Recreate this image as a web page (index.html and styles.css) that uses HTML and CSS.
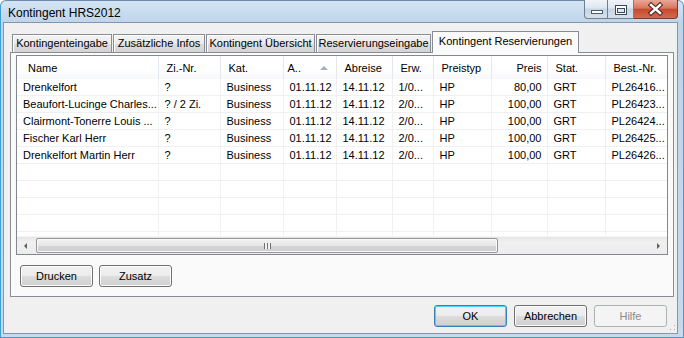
FILE: index.html
```html
<!DOCTYPE html>
<html lang="de">
<head>
    <meta charset="UTF-8">
    <title>Kontingent HRS2012</title>
    <link rel="stylesheet" href="styles.css">
</head>
<body>
    <div class="window">
        <!-- Title bar -->
        <div class="titlebar">
            <span class="title">Kontingent HRS2012</span>
            <div class="caption-btns">
                <div class="cap cap-min">
                    <svg width="24" height="18" viewBox="0 0 24 18"><rect x="6.5" y="10.5" width="11" height="3" fill="#fbfcfd" stroke="#4a5b6e"/></svg>
                </div>
                <div class="cap cap-max">
                    <svg width="26" height="18" viewBox="0 0 26 18"><rect x="7.5" y="5.5" width="11" height="9" fill="#fff" stroke="#3a4a5c"/><rect x="9.5" y="8.5" width="7" height="4" fill="#dfe6ee" stroke="#3a4a5c"/></svg>
                </div>
                <div class="cap cap-close">
                    <svg width="44" height="18" viewBox="0 0 44 18"><path d="M17 5 L26 13 M26 5 L17 13" stroke="#4b2a24" stroke-width="4.5" stroke-linecap="square"/><path d="M17 5 L26 13 M26 5 L17 13" stroke="#fff" stroke-width="2.4" stroke-linecap="square"/></svg>
                </div>
            </div>
        </div>

        <div class="client">
            <!-- Tabs -->
            <div class="tabs">
                <div class="tab tab-1">Kontingenteingabe</div>
                <div class="tab tab-2">Zusätzliche Infos</div>
                <div class="tab tab-3">Kontingent Übersicht</div>
                <div class="tab tab-4">Reservierungseingabe</div>
                <div class="tab tab-active">Kontingent Reservierungen</div>
            </div>

            <div class="panel">
                <div class="listview">
                    <div class="list-area">
                        <table>
                            <colgroup>
                                <col class="c-name"><col class="c-zi"><col class="c-kat"><col class="c-an"><col class="c-ab">
                                <col class="c-erw"><col class="c-typ"><col class="c-preis"><col class="c-stat"><col class="c-best">
                            </colgroup>
                            <thead>
                                <tr>
                                    <th class="h-name">Name</th>
                                    <th>Zi.-Nr.</th>
                                    <th>Kat.</th>
                                    <th class="h-sort">A..<span class="sort-arrow"></span></th>
                                    <th>Abreise</th>
                                    <th>Erw.</th>
                                    <th>Preistyp</th>
                                    <th class="num">Preis</th>
                                    <th>Stat.</th>
                                    <th class="h-best">Best.-Nr.</th>
                                </tr>
                            </thead>
                            <tbody>
                                <tr><td>Drenkelfort</td><td>?</td><td>Business</td><td>01.11.12</td><td>14.11.12</td><td>1/0...</td><td>HP</td><td class="num">80,00</td><td>GRT</td><td>PL26416...</td></tr>
                                <tr><td>Beaufort-Lucinge Charles...</td><td>? / 2 Zi.</td><td>Business</td><td>01.11.12</td><td>14.11.12</td><td>2/0...</td><td>HP</td><td class="num">100,00</td><td>GRT</td><td>PL26423...</td></tr>
                                <tr><td>Clairmont-Tonerre Louis ...</td><td>?</td><td>Business</td><td>01.11.12</td><td>14.11.12</td><td>2/0...</td><td>HP</td><td class="num">100,00</td><td>GRT</td><td>PL26424...</td></tr>
                                <tr><td>Fischer Karl Herr</td><td>?</td><td>Business</td><td>01.11.12</td><td>14.11.12</td><td>2/0...</td><td>HP</td><td class="num">100,00</td><td>GRT</td><td>PL26425...</td></tr>
                                <tr><td>Drenkelfort Martin Herr</td><td>?</td><td>Business</td><td>01.11.12</td><td>14.11.12</td><td>2/0...</td><td>HP</td><td class="num">100,00</td><td>GRT</td><td>PL26426...</td></tr>
                                <tr><td></td><td></td><td></td><td></td><td></td><td></td><td></td><td></td><td></td><td></td></tr>
                                <tr><td></td><td></td><td></td><td></td><td></td><td></td><td></td><td></td><td></td><td></td></tr>
                                <tr><td></td><td></td><td></td><td></td><td></td><td></td><td></td><td></td><td></td><td></td></tr>
                                <tr><td></td><td></td><td></td><td></td><td></td><td></td><td></td><td></td><td></td><td></td></tr>
                                <tr><td></td><td></td><td></td><td></td><td></td><td></td><td></td><td></td><td></td><td></td></tr>
                            </tbody>
                        </table>
                    </div>
                    <!-- Horizontal scrollbar -->
                    <div class="hscroll">
                        <div class="arrow-btn arrow-left"><span class="tri-left"></span></div>
                        <div class="thumb"><span class="grip"></span></div>
                        <div class="track-rest"></div>
                        <div class="arrow-btn arrow-right"><span class="tri-right"></span></div>
                    </div>
                </div>

                <div class="panel-buttons">
                    <button class="btn">Drucken</button>
                    <button class="btn">Zusatz</button>
                </div>
            </div>

            <div class="dialog-buttons">
                <button class="btn btn-default">OK</button>
                <button class="btn">Abbrechen</button>
                <button class="btn btn-disabled">Hilfe</button>
                <svg class="size-grip" width="7" height="13" viewBox="0 0 7 13">
                    <rect x="5" y="3" width="1" height="1" fill="#a8a8a8"/>
                    <rect x="5" y="7" width="1" height="1" fill="#a8a8a8"/>
                    <rect x="1" y="7" width="1" height="1" fill="#a8a8a8"/>
                    <rect x="5" y="11" width="1" height="1" fill="#a8a8a8"/>
                    <rect x="1" y="11" width="1" height="1" fill="#a8a8a8"/>
                </svg>
            </div>
        </div>
    </div>
</body>
</html>
```

FILE: styles.css
```css
body {
    margin: 0;
    font-family: 'Liberation Sans', Arial, sans-serif;
    font-size: 11px;
    color: #000;
    background: #fff;
}

/* window frame */
.window {
    width: 684px;
    height: 338px;
    box-sizing: border-box;
    border: 1px solid #3e9fd3;
    border-top-color: #6c8cae;
    border-radius: 6px 6px 0 0;
    padding: 0 5px 3px 2px;
    background: linear-gradient(#d4e4f4, #bed4ea 22px, #c6daee);
    display: flex;
    flex-direction: column;
}
.titlebar {
    height: 21px;
    display: flex;
    justify-content: space-between;
    align-items: flex-start;
}
.title {
    padding: 5px 0 0 5px;
    font-size: 12px;
    line-height: 14px;
    color: #000;
}
.caption-btns {
    display: flex;
    margin-top: -1px;
}
.cap {
    height: 19px;
    box-sizing: border-box;
    border: 1px solid #6f8093;
    border-top: none;
    background: linear-gradient(#f0f4f9, #dde6f0 45%, #c7d4e3 50%, #d6e0ec);
}
.cap svg {
    display: block;
}
.cap-min {
    width: 24px;
    border-radius: 0 0 0 4px;
}
.cap-max {
    width: 26px;
    border-left: none;
}
.cap-close {
    width: 44px;
    border-left: none;
    border-color: #7a3a2e;
    border-radius: 0 0 4px 0;
    background: linear-gradient(#eba796, #d9765f 45%, #c64a2f 52%, #d46a4e);
}

/* client area */
.client {
    flex: 1;
    background-color: #f0f0f0;
    border: 1px solid #8396ab;
    padding: 8px 3px 0 6px;
    display: flex;
    flex-direction: column;
}

/* tabs */
.tabs {
    height: 21px;
    display: flex;
    align-items: flex-end;
    padding-left: 2px;
    position: relative;
    z-index: 1;
}
.tab {
    height: 18px;
    box-sizing: border-box;
    border: 1px solid #898c95;
    border-bottom: none;
    margin-right: 1px;
    background: linear-gradient(#f3f3f3, #ebebeb 50%, #dddddd 51%, #d4d4d4);
    box-shadow: inset 1px 1px 0 #fff;
    text-align: center;
    line-height: 17px;
    white-space: nowrap;
}
.tab-1 { width: 100px; }
.tab-2 { width: 92px; }
.tab-3 { width: 109px; }
.tab-4 { width: 115px; }
.tab-active {
    width: 147px;
    height: 22px;
    margin-bottom: -1px;
    background: #fafafa;
    box-shadow: none;
    line-height: 19px;
}

.panel {
    height: 245px;
    box-sizing: border-box;
    border: 1px solid #898c95;
    background-color: #fafafa;
    padding: 2px 5px 0 5px;
}

/* list view */
.listview {
    height: 200px;
    box-sizing: border-box;
    border: 1px solid #828790;
    background: #fff;
    display: flex;
    flex-direction: column;
}
.list-area {
    height: 181px;
    overflow: hidden;
}
table {
    width: 650px;
    table-layout: fixed;
    border-collapse: collapse;
}
.c-name { width: 141px; }
.c-zi { width: 62px; }
.c-kat { width: 63px; }
.c-an { width: 53px; }
.c-ab { width: 56px; }
.c-erw { width: 41px; }
.c-typ { width: 58px; }
.c-preis { width: 56px; }
.c-stat { width: 58px; }
.c-best { width: 62px; }

th {
    height: 23px;
    padding: 0 0 0 8px;
    font-weight: normal;
    text-align: left;
    white-space: nowrap;
    overflow: hidden;
    border-right: 1px solid #e3e8ee;
    background: linear-gradient(#fff, #fff 60%, #f6f7f9);
}
th.h-name { padding-left: 11px; }
th.h-sort { padding-left: 4px; position: relative; }
th.h-best { padding-left: 8px; }
.sort-arrow {
    position: absolute;
    left: 36px;
    top: 10px;
    border-left: 4px solid transparent;
    border-right: 4px solid transparent;
    border-bottom: 4px solid #a7b0ba;
}
td {
    height: 16px;
    padding: 0 0 0 6px;
    line-height: 16px;
    white-space: nowrap;
    overflow: hidden;
    border-right: 1px solid #f0f0f0;
    border-bottom: 1px solid #f0f0f0;
}
th.num, td.num {
    text-align: right;
    padding: 0 5px 0 0;
}

/* horizontal scrollbar */
.hscroll {
    height: 17px;
    display: flex;
    align-items: center;
    background: linear-gradient(#e6e6e6, #f0f0f0 30%, #ededed);
    border-top: 1px solid #f4f4f4;
}
.arrow-btn {
    width: 17px;
    height: 17px;
    display: flex;
    align-items: center;
    justify-content: center;
}
.arrow-left { margin-right: 2px; }
.tri-left {
    border-top: 3px solid transparent;
    border-bottom: 3px solid transparent;
    border-right: 3px solid #606060;
}
.tri-right {
    border-top: 3px solid transparent;
    border-bottom: 3px solid transparent;
    border-left: 3px solid #606060;
}
.thumb {
    width: 462px;
    height: 15px;
    box-sizing: border-box;
    border: 1px solid #969696;
    border-radius: 2px;
    background: linear-gradient(#f3f3f3, #e6e6e6 50%, #d5d5d5 51%, #cfcfcf);
    box-shadow: inset 0 0 0 1px #f8f8f8;
    display: flex;
    align-items: center;
    justify-content: center;
}
.grip {
    width: 7px;
    height: 6px;
    background: repeating-linear-gradient(90deg, #6e6e6e 0 1px, #f4f4f4 1px 3px);
}
.track-rest {
    flex: 1;
}

/* buttons */
.panel-buttons {
    display: flex;
    gap: 6px;
    padding: 10px 0 0 4px;
}
.btn {
    width: 73px;
    height: 22px;
    padding: 0;
    font-family: 'Liberation Sans', Arial, sans-serif;
    font-size: 11px;
    color: #000;
    border: 1px solid #707070;
    border-radius: 3px;
    background: linear-gradient(#f2f2f2, #ebebeb 50%, #dddddd 51%, #cfcfcf);
    box-shadow: inset 0 0 0 1px #fcfcfc;
}
.btn-default {
    border-color: #3c7fb1;
    box-shadow: inset 0 0 0 1px #48d2fa;
    background: linear-gradient(#f2f2f2, #ebebeb 50%, #dddddd 51%, #cfcfcf);
}
.btn-disabled {
    color: #8b8b8b;
    border-color: #adb2b5;
    background: #f4f4f4;
    box-shadow: none;
}
.dialog-buttons {
    display: flex;
    justify-content: flex-end;
    align-items: flex-start;
    gap: 7px;
    padding-top: 8px;
    position: relative;
    padding-right: 7px;
}
.size-grip {
    position: absolute;
    right: -2px;
    bottom: -8px;
}
```
